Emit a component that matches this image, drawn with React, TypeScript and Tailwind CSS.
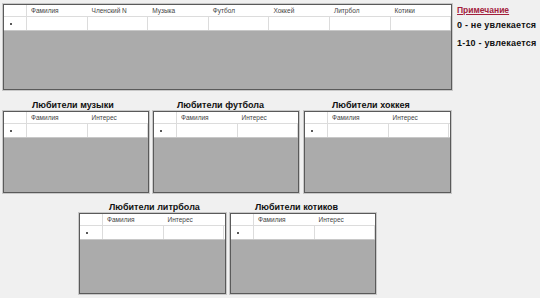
import React from "react";

const font = { fontFamily: '"Liberation Sans", Arial, sans-serif' };

function Grid({
  cols,
  width,
  height,
  colW,
}: {
  cols: string[];
  width: number;
  height: number;
  colW: number;
}) {
  return (
    <div
      className="flex flex-col border border-[#5a5a5a] bg-[#ababab] overflow-hidden shadow-[0_0_0_1px_#c8c8c8]"
      style={{ width, height }}
    >
      <div className="flex h-[12px] bg-white border-b border-[#dcdcdc] shrink-0">
        <div className="w-[23px] shrink-0 border-r border-[#dcdcdc]" />
        {cols.map((c) => (
          <div
            key={c}
            className="shrink-0 pl-[4px] text-[6.5px] leading-[12px] text-[#444] whitespace-nowrap overflow-hidden"
            style={{ width: colW }}
          >
            {c}
          </div>
        ))}
      </div>
      <div className="flex h-[14px] bg-white shrink-0 border-b border-[#c8c8c8]">
        <div className="w-[23px] shrink-0 border-r border-[#dcdcdc] flex items-center pl-[6px]">
          <div className="w-[2px] h-[2px] rounded-full bg-[#222]" />
        </div>
        {cols.map((c) => (
          <div
            key={c}
            className="shrink-0 border-r border-[#dcdcdc]"
            style={{ width: colW }}
          />
        ))}
      </div>
    </div>
  );
}

function Panel({
  title,
  titlePad,
  width,
  height,
}: {
  title: string;
  titlePad: number;
  width: number;
  height: number;
}) {
  return (
    <div className="flex flex-col shrink-0" style={{ width }}>
      <div
        className="h-[12px] text-[9px] leading-[12px] font-bold text-[#111] whitespace-nowrap"
        style={{ paddingLeft: titlePad }}
      >
        {title}
      </div>
      <Grid cols={["Фамилия", "Интерес"]} width={width} height={height} colW={60.5} />
    </div>
  );
}

export default function App() {
  return (
    <div className="w-[540px] h-[298px] bg-[#f0f0f0] overflow-hidden" style={font}>
      <div className="flex pt-[4px] pl-[3px]">
        <Grid
          cols={["Фамилия", "Членский N", "Музыка", "Футбол", "Хоккей", "Литрбол", "Котики"]}
          width={449}
          height={86}
          colW={60.6}
        />
        <div className="ml-[5px] flex flex-col">
          <div className="text-[8.5px] leading-[10px] mt-[1px] font-bold text-[#a3213d] underline">
            Примечание
          </div>
          <div className="text-[9px] leading-[10px] mt-[5px] font-bold tracking-[0.2px] text-[#111] whitespace-nowrap">
            0 - не увлекается
          </div>
          <div className="text-[9px] leading-[10px] mt-[8px] font-bold tracking-[0.2px] text-[#111] whitespace-nowrap">
            1-10 - увлекается
          </div>
        </div>
      </div>
      <div className="flex mt-[9px] pl-[3px]">
        <Panel title="Любители музыки" titlePad={29} width={146} height={82} />
        <div className="ml-[4px]">
          <Panel title="Любители футбола" titlePad={24} width={146} height={82} />
        </div>
        <div className="ml-[5px]">
          <Panel title="Любители хоккея" titlePad={28} width={147} height={82} />
        </div>
      </div>
      <div className="flex mt-[8px] pl-[79px]">
        <Panel title="Любители литрбола" titlePad={30} width={147} height={81} />
        <div className="ml-[4px]">
          <Panel title="Любители котиков" titlePad={25} width={146} height={81} />
        </div>
      </div>
    </div>
  );
}
